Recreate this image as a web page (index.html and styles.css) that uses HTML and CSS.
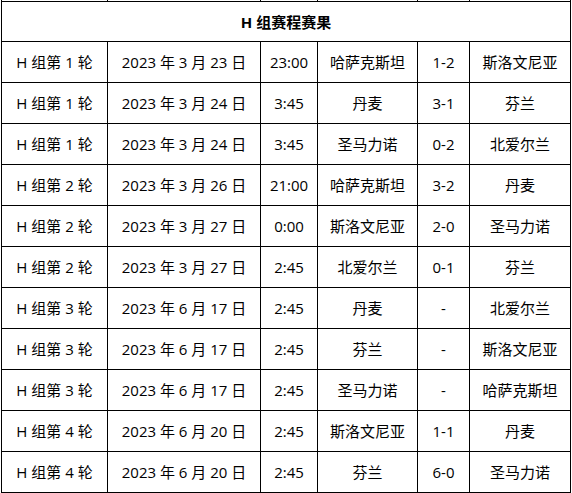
FILE: index.html
```html
<!DOCTYPE html>
<html lang="zh-CN">
<head>
<meta charset="utf-8">
<link rel="stylesheet" href="styles.css">
</head>
<body>
<table class="schedule">
<colgroup>
<col class="c1"><col class="c2"><col class="c3"><col class="c4"><col class="c5"><col class="c6">
</colgroup>
<tr class="cut"><td></td><td></td><td></td><td></td><td></td><td></td></tr>
<tr class="head"><th colspan="6">H 组赛程赛果</th></tr>
<tr><td>H 组第 1 轮</td><td>2023 年 3 月 23 日</td><td>23:00</td><td>哈萨克斯坦</td><td>1-2</td><td>斯洛文尼亚</td></tr>
<tr><td>H 组第 1 轮</td><td>2023 年 3 月 24 日</td><td>3:45</td><td>丹麦</td><td>3-1</td><td>芬兰</td></tr>
<tr><td>H 组第 1 轮</td><td>2023 年 3 月 24 日</td><td>3:45</td><td>圣马力诺</td><td>0-2</td><td>北爱尔兰</td></tr>
<tr><td>H 组第 2 轮</td><td>2023 年 3 月 26 日</td><td>21:00</td><td>哈萨克斯坦</td><td>3-2</td><td>丹麦</td></tr>
<tr><td>H 组第 2 轮</td><td>2023 年 3 月 27 日</td><td>0:00</td><td>斯洛文尼亚</td><td>2-0</td><td>圣马力诺</td></tr>
<tr><td>H 组第 2 轮</td><td>2023 年 3 月 27 日</td><td>2:45</td><td>北爱尔兰</td><td>0-1</td><td>芬兰</td></tr>
<tr><td>H 组第 3 轮</td><td>2023 年 6 月 17 日</td><td>2:45</td><td>丹麦</td><td>-</td><td>北爱尔兰</td></tr>
<tr><td>H 组第 3 轮</td><td>2023 年 6 月 17 日</td><td>2:45</td><td>芬兰</td><td>-</td><td>斯洛文尼亚</td></tr>
<tr><td>H 组第 3 轮</td><td>2023 年 6 月 17 日</td><td>2:45</td><td>圣马力诺</td><td>-</td><td>哈萨克斯坦</td></tr>
<tr><td>H 组第 4 轮</td><td>2023 年 6 月 20 日</td><td>2:45</td><td>斯洛文尼亚</td><td>1-1</td><td>丹麦</td></tr>
<tr><td>H 组第 4 轮</td><td>2023 年 6 月 20 日</td><td>2:45</td><td>芬兰</td><td>6-0</td><td>圣马力诺</td></tr>
<tr class="stub"><td></td><td></td><td></td><td></td><td></td><td></td></tr>
</table>
</body>
</html>
```
FILE: styles.css
```css
html, body {
  margin: 0;
  padding: 0;
  background: #fff;
}
body {
  overflow: hidden;
  height: 493px;
}
.schedule {
  margin-left: 1px;
  border-collapse: collapse;
  table-layout: fixed;
  width: 569px;
  font-family: "Open Sans", "Noto Sans CJK SC", sans-serif;
  font-size: 15px;
  color: #000;
}
.c1 { width: 106px; }
.c2 { width: 153px; }
.c3 { width: 57px; }
.c4 { width: 100px; }
.c5 { width: 52px; }
.c6 { width: 101px; }
.schedule td, .schedule th {
  border: 1px solid #000;
  padding: 0;
  text-align: center;
  white-space: nowrap;
  overflow: hidden;
  height: 40px;
  line-height: 20px;
}
.schedule .cut td {
  border-top: none;
  height: 1px;
}
.schedule .stub td {
  border-bottom: none;
  height: 20px;
}
.schedule .head th {
  height: 39px;
  font-weight: bold;
}
```
